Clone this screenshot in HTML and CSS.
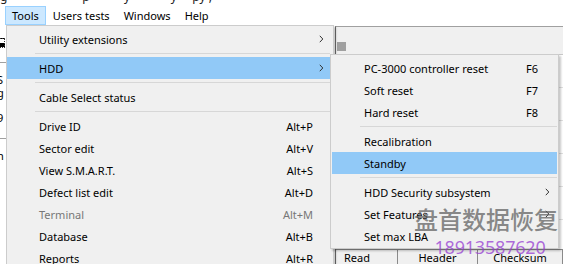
FILE: index.html
```html
<!DOCTYPE html>
<html lang="en">
<head>
    <meta charset="UTF-8">
    <meta name="viewport" content="width=device-width, initial-scale=1.0">
    <title>PC-3000 Tools menu</title>
    <link rel="stylesheet" href="styles.css">
</head>
<body>
    <div class="screen">
        <div class="titlecut"><span>g                        p           y             y     py ,</span></div>

        <nav class="menubar">
            <span class="mb-item active">Tools</span>
            <span class="mb-item">Users tests</span>
            <span class="mb-item">Windows</span>
            <span class="mb-item">Help</span>
        </nav>

        <div class="workspace">
            <div class="side">
                <span class="side-icon"></span>
                <span class="side-line"></span>
                <span class="side-txt">S<br>g</span>
                <span class="side-txt low">9</span>
                <span class="side-line"></span>
                <span class="side-txt">n</span>
            </div>
            <div class="panel">
                <div class="toolstrip"><span class="grip"></span></div>
                <div class="grid">
                    <div class="grid-row"></div>
                    <div class="grid-row"></div>
                    <div class="grid-row"></div>
                    <div class="grid-row"></div>
                    <div class="grid-row"></div>
                </div>
                <div class="buttons">
                    <span class="btn read">Read</span>
                    <span class="btn header">Header</span>
                    <span class="btn checksum">Checksum</span>
                </div>
            </div>
        </div>

        <div class="menu main">
            <div class="item"><span>Utility extensions</span><span class="key"></span><span class="arrow"><svg width="5" height="8" viewBox="0 0 5 8"><path d="M0.8 0.8 L3.8 4 L0.8 7.2" /></svg></span></div>
            <div class="sep"></div>
            <div class="item hot"><span>HDD</span><span class="key"></span><span class="arrow"><svg width="5" height="8" viewBox="0 0 5 8"><path d="M0.8 0.8 L3.8 4 L0.8 7.2" /></svg></span></div>
            <div class="sep"></div>
            <div class="item"><span>Cable Select status</span><span class="key"></span><span class="arrow"></span></div>
            <div class="sep"></div>
            <div class="item"><span>Drive ID</span><span class="key">Alt+P</span><span class="arrow"></span></div>
            <div class="item"><span>Sector edit</span><span class="key">Alt+V</span><span class="arrow"></span></div>
            <div class="item"><span>View S.M.A.R.T.</span><span class="key">Alt+S</span><span class="arrow"></span></div>
            <div class="item"><span>Defect list edit</span><span class="key">Alt+D</span><span class="arrow"></span></div>
            <div class="item off"><span>Terminal</span><span class="key">Alt+M</span><span class="arrow"></span></div>
            <div class="item"><span>Database</span><span class="key">Alt+B</span><span class="arrow"></span></div>
            <div class="item"><span>Reports</span><span class="key">Alt+R</span><span class="arrow"></span></div>
        </div>

        <div class="menu sub">
            <div class="item"><span>PC-3000 controller reset</span><span class="key">F6</span><span class="arrow"></span></div>
            <div class="item"><span>Soft reset</span><span class="key">F7</span><span class="arrow"></span></div>
            <div class="item"><span>Hard reset</span><span class="key">F8</span><span class="arrow"></span></div>
            <div class="sep"></div>
            <div class="item"><span>Recalibration</span><span class="key"></span><span class="arrow"></span></div>
            <div class="item hot"><span>Standby</span><span class="key"></span><span class="arrow"></span></div>
            <div class="sep"></div>
            <div class="item"><span>HDD Security subsystem</span><span class="key"></span><span class="arrow"><svg width="5" height="8" viewBox="0 0 5 8"><path d="M0.8 0.8 L3.8 4 L0.8 7.2" /></svg></span></div>
            <div class="item"><span>Set Features</span><span class="key"></span><span class="arrow"><svg width="5" height="8" viewBox="0 0 5 8"><path d="M0.8 0.8 L3.8 4 L0.8 7.2" /></svg></span></div>
            <div class="item"><span>Set max LBA</span><span class="key"></span><span class="arrow"></span></div>
        </div>

        <div class="watermark">
            <div class="wm-name">盘首数据恢复</div>
            <div class="wm-phone">18913587620</div>
        </div>
    </div>
</body>
</html>
```

FILE: styles.css
```css
body {
    margin: 0;
    background: #fff;
}
.screen {
    position: relative;
    width: 563px;
    height: 264px;
    overflow: hidden;
    background: #fff;
    font-family: "Noto Sans", "Open Sans", sans-serif;
    font-size: 11px;
    color: #000;
}

/* cut-off title line at the very top */
.titlecut {
    height: 6px;
    overflow: hidden;
}
.titlecut span {
    display: block;
    margin-top: -11px;
    font-size: 12px;
    line-height: 16px;
    white-space: pre;
    color: #222;
}

/* menu bar */
.menubar {
    display: flex;
    height: 19px;
    padding-left: 5px;
}
.mb-item {
    padding: 0 6px;
    line-height: 17px;
    border: 1px solid transparent;
}
.mb-item.active {
    background: #cce8ff;
    border-color: #99d1ff;
}

/* window content behind the menus */
.workspace {
    display: grid;
    grid-template-columns: 335px 1fr;
    height: 239px;
}
.side {
    display: flex;
    flex-direction: column;
    overflow: hidden;
    width: 7px;
}
.side-icon {
    width: 4px;
    height: 8px;
    margin-top: 13px;
    border: 1px dotted #333;
    border-left: none;
    background: linear-gradient(#fff 50%, #000 50%);
}
.side-line {
    height: 1px;
    margin-top: 14px;
    background: #a0a0a0;
}
.side-txt {
    margin-top: 10px;
    margin-left: -3px;
    line-height: 13px;
}
.side-txt.low {
    margin-top: 12px;
}
.panel {
    margin-top: 1px;
    border-top: 1px solid #a0a0a0;
    border-left: 1px solid #6d6d6d;
    background: #f0f0f0;
    display: flex;
    flex-direction: column;
}
.toolstrip {
    height: 27px;
}
.grip {
    display: block;
    width: 9px;
    height: 9px;
    margin: 15px 0 0 1px;
    background: #a0a0a0;
}
.grid {
    height: 194px;
    background: #fff;
    border-top: 1px solid #c8c8c8;
}
.grid-row {
    height: 32px;
    border-bottom: 1px solid #e0e0e0;
}
.buttons {
    display: flex;
    height: 22px;
    border-top: 1px solid #8a8a8a;
}
.btn {
    border-right: 1px solid #8a8a8a;
    background: #f0f0f0;
    line-height: 16px;
    padding: 0 8px;
}
.btn.read {
    width: 45px;
}
.btn.header {
    width: 63px;
    text-align: center;
}
.btn.checksum {
    flex: 1;
    text-align: center;
}

/* popup menus */
.menu {
    position: absolute;
    background: #f0f0f0;
    border: 1px solid #cccccc;
    box-shadow: 2px 2px 2px rgba(0, 0, 0, 0.22);
}
.main {
    left: 6px;
    top: 25px;
    width: 323px;
    padding: 2px 3px 2px 0;
}
.sub {
    left: 330px;
    top: 54px;
    width: 225px;
    padding: 2px 1px 1px 1px;
}
.item {
    display: grid;
    grid-template-columns: 1fr auto 17px;
    align-items: center;
    height: 22px;
    padding-left: 32px;
    white-space: nowrap;
}
.sub .item {
    grid-template-columns: 1fr auto 19px;
}
.item.hot {
    background: #91c9f7;
}
.item.off {
    color: #777;
}
.key {
    text-align: right;
}
.arrow {
    display: flex;
    justify-content: center;
}
.arrow svg path {
    fill: none;
    stroke: #333;
    stroke-width: 1;
}
.sep {
    height: 7px;
    box-sizing: border-box;
    padding-top: 3px;
}
.sep::after {
    content: "";
    display: block;
    height: 1px;
    margin-left: 28px;
    background: #d7d7d7;
}

/* watermark over the screenshot */
.watermark {
    position: absolute;
    left: 413px;
    top: 207px;
    width: 146px;
    text-align: center;
    line-height: 1;
}
.wm-name {
    font-family: "Noto Sans CJK SC", sans-serif;
    font-size: 24px;
    font-weight: 500;
    color: rgba(100, 100, 100, 0.75);
}
.wm-phone {
    margin-top: 7px;
    padding-left: 8px;
    font-family: "Noto Sans", sans-serif;
    font-size: 18px;
    letter-spacing: -0.2px;
    color: rgba(150, 60, 210, 0.75);
}
```
